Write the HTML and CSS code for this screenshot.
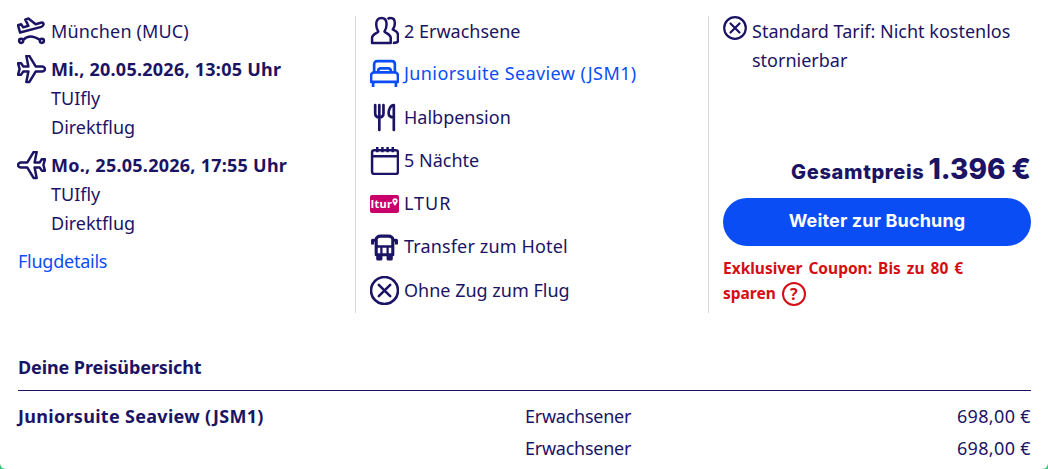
FILE: index.html
```html
<!DOCTYPE html>
<html lang="de">

<head>
    <meta charset="utf-8">
    <title>Angebot</title>
    <link rel="stylesheet" href="styles.css">
</head>

<body>
    <main class="card">
        <section class="summary">
            <!-- Flights -->
            <div class="col col-flight">
                <div class="flight-row">
                    <svg class="icon" viewBox="0 0 28 28" fill="none" stroke="#1b1464" stroke-width="2.400" stroke-linejoin="round" stroke-linecap="round">
                        <path d="M3 15L1 8l3-1 2 3 5-1.500L8 2.500l3-1 7 5.500 5-1.500c2-.5 3 .5 2.500 2-.3 1-1 1.500-2 2z"/>
                        <circle cx="4" cy="23" r="2"/>
                        <circle cx="24" cy="23" r="2"/>
                        <path d="M6 22c4-4 10-4 16 0"/>
                    </svg>
                    <span class="airport">München (MUC)</span>
                </div>
                <div class="flight-row flight-leg">
                    <svg class="icon" viewBox="0 0 28 28" fill="none" stroke="#1b1464" stroke-width="2.400" stroke-linejoin="round">
                        <path d="M9 1h3l6 10h6c2 0 3 1.500 3 2.500S26 16 24 16h-6l-6 10H9l2-10H6l-2 3H1l1.500-5.500L1 8h3l2 3h5z"/>
                    </svg>
                    <strong class="leg-time">Mi., 20.05.2026, 13:05 Uhr</strong>
                </div>
                <div class="flight-sub">TUIfly</div>
                <div class="flight-sub">Direktflug</div>
                <div class="flight-row flight-leg">
                    <svg class="icon" viewBox="0 0 28 28" fill="none" stroke="#1b1464" stroke-width="2.400" stroke-linejoin="round">
                        <path d="M19 1h-3l-6 10H4c-2 0-3 1.500-3 2.500S2 16 4 16h6l6 10h3l-2-10h5l2 3h3l-1.500-5.500L27 8h-3l-2 3h-5z"/>
                    </svg>
                    <strong class="leg-time">Mo., 25.05.2026, 17:55 Uhr</strong>
                </div>
                <div class="flight-sub">TUIfly</div>
                <div class="flight-sub">Direktflug</div>
                <a class="link details-link" href="#">Flugdetails</a>
            </div>

            <!-- Hotel facts -->
            <div class="col col-hotel">
                <div class="fact">
                    <svg class="icon" viewBox="0 0 28 28" fill="none" stroke="#1b1464" stroke-width="2.400" stroke-linejoin="round">
                        <path d="M2 26v-5c0-3 4-4 6-6-2-3-2-5-2-7 0-4 2-6 5-6s5 2 5 6c0 2 0 4-2 7 2 2 6 3 6 6v5z"/>
                        <path d="M17 3c1-1 2-1 3-1 3 0 4 2 4 5 0 2-.5 4-2 6 2 1 5 2 5 5v6c0 1-1 2-5 2"/>
                    </svg>
                    <span class="first-label">2 Erwachsene</span>
                </div>
                <a class="fact link" href="#">
                    <svg class="icon" viewBox="0 0 28 28" fill="none" stroke="#0b4df5" stroke-width="2.600" stroke-linejoin="round">
                        <path d="M4 13V5c0-1.500 1-3 3-3h14c2 0 3 1.500 3 3v8"/>
                        <path d="M8 13v-2c0-1 1-2 2-2h8c1 0 2 1 2 2v2"/>
                        <path d="M4 13h20c1 0 3 1 3 3v6H1v-6c0-2 2-3 3-3z"/>
                        <path d="M3 22v5M25 22v5"/>
                    </svg>
                    <span class="room-link">Juniorsuite Seaview (JSM1)</span>
                </a>
                <div class="fact">
                    <svg class="icon" viewBox="0 0 28 28" fill="none" stroke="#1b1464" stroke-width="2.600" stroke-linecap="round" stroke-linejoin="round">
                        <path d="M5 2v8c0 3 2 4 4 4s4-1 4-4V2M9 2v24"/>
                        <path d="M23 26V2c-3 0-5 4-5 8 0 3 2 4 5 4"/>
                    </svg>
                    <span>Halbpension</span>
                </div>
                <div class="fact">
                    <svg class="icon" viewBox="0 0 28 28" fill="none" stroke="#1b1464" stroke-width="2.400" stroke-linejoin="round">
                        <rect x="2" y="4" width="25" height="23" rx="2"/>
                        <path d="M2 10h25M7 1v5M12 1v5M17 1v5M22 1v5"/>
                    </svg>
                    <span>5 Nächte</span>
                </div>
                <div class="fact">
                    <span class="ltur-logo">ltur<svg class="ltur-pin" viewBox="0 0 8 10"><path fill="#fff" d="M4 0a3.500 3.500 0 0 1 3.500 3.500C7.500 6 4 10 4 10S.5 6 .5 3.500A3.500 3.500 0 0 1 4 0z"/><circle cx="4" cy="3.500" r="1.300" fill="#c9006b"/></svg></span>
                    <span class="brand-label">LTUR</span>
                </div>
                <div class="fact">
                    <svg class="icon" viewBox="0 0 28 28" fill="none" stroke="#1b1464" stroke-width="3" stroke-linejoin="round">
                        <path d="M6 22V7c0-2 2-3 4-3h8c2 0 4 1 4 3v15z"/>
                        <path d="M6 14h16M11 14v8M17 14v8" stroke-width="2.200"/>
                        <path d="M2.500 12V8H6M25.500 12V8H22M7.500 22v4h3v-4M17.500 22v4h3v-4"/>
                    </svg>
                    <span class="transfer-label">Transfer zum Hotel</span>
                </div>
                <div class="fact">
                    <svg class="icon" viewBox="0 0 28 28" fill="none" stroke="#1b1464" stroke-width="2.500" stroke-linecap="round">
                        <circle cx="14" cy="14" r="13"/>
                        <path d="M8.500 8.500l11 11M19.500 8.500l-11 11"/>
                    </svg>
                    <span>Ohne Zug zum Flug</span>
                </div>
            </div>

            <!-- Price -->
            <div class="col col-price">
                <div class="tariff">
                    <svg class="icon-small" viewBox="0 0 24 24" fill="none" stroke="#1b1464" stroke-width="2.200" stroke-linecap="round">
                        <circle cx="12" cy="12" r="10.800"/>
                        <path d="M7.500 7.500l9 9M16.500 7.500l-9 9"/>
                    </svg>
                    <span class="tariff-text">Standard Tarif: Nicht kostenlos stornierbar</span>
                </div>
                <div class="total">
                    <span class="total-label">Gesamtpreis</span>
                    <span class="total-amount">1.396 €</span>
                </div>
                <button type="button" class="book-btn">Weiter zur Buchung</button>
                <div class="coupon">
                    <div>Exklusiver Coupon: Bis zu 80 €</div>
                    <div class="coupon-last">
                        <span>sparen</span>
                        <span class="coupon-help">?</span>
                    </div>
                </div>
            </div>
        </section>

        <section class="overview">
            <h2>Deine Preisübersicht</h2>
            <div class="price-row">
                <strong>Juniorsuite Seaview (JSM1)</strong>
                <span class="price-type">Erwachsener</span>
                <span class="price">698,00 €</span>
            </div>
            <div class="price-row">
                <span></span>
                <span class="price-type">Erwachsener</span>
                <span class="price">698,00 €</span>
            </div>
        </section>
    </main>
</body>

</html>
```

FILE: styles.css
```css
html, body {
    margin: 0;
    height: 469px;
    overflow: hidden;
}

body {
    background: #3ec983;
    color: #1b1464;
    font-family: "Noto Sans", sans-serif;
    font-size: 18px;
    line-height: 29px;
}

strong {
    font-weight: 700;
    letter-spacing: .3px;
}

.card {
    height: 469px;
    box-sizing: border-box;
    padding: 16px 17px 0 18px;
    background: #fff;
    border-radius: 0 0 6px 6px;
    overflow: hidden;
}

.summary {
    display: grid;
    grid-template-columns: 337px 353px 1fr;
    grid-template-rows: 297px;
}

.col-flight {
    padding-top: 1px;
}

.col-hotel, .col-price {
    border-left: 1px solid #d8d8d8;
    padding-left: 14px;
}

.col-price {
    display: flex;
    flex-direction: column;
}

.link {
    color: #0b4df5;
    text-decoration: none;
}

.icon {
    width: 29px;
    height: 29px;
    flex: none;
}

.flight-row {
    display: flex;
    align-items: center;
    gap: 5px;
    margin-left: -1px;
}

.airport {
    letter-spacing: .15px;
}

.leg-time {
    letter-spacing: .25px;
}

.flight-leg {
    margin-top: 9px;
}

.flight-sub {
    padding-left: 33px;
}

.details-link {
    display: block;
    margin-top: 9px;
    letter-spacing: -.25px;
}

.fact {
    display: flex;
    align-items: center;
    gap: 5px;
    height: 29px;
    margin-bottom: 14.300px;
}

.first-label {
    margin-top: 2px;
}

.room-link {
    letter-spacing: .4px;
}

.brand-label {
    letter-spacing: 1px;
}

.transfer-label {
    letter-spacing: .15px;
}

.ltur-logo {
    display: flex;
    align-items: center;
    justify-content: center;
    width: 29px;
    height: 18px;
    background: #c9006b;
    border-radius: 2px;
    color: #fff;
    font-size: 11px;
    font-weight: 700;
    line-height: 18px;
    letter-spacing: .3px;
}

.ltur-pin {
    width: 6px;
    height: 8px;
    margin-bottom: 4px;
}

.tariff {
    display: flex;
    gap: 5px;
}

.tariff-text {
    margin-top: 1px;
}

.icon-small {
    width: 24px;
    height: 24px;
    flex: none;
}

.total {
    display: flex;
    justify-content: flex-end;
    align-items: baseline;
    gap: 4px;
    margin-top: 80px;
    font-family: "Inter", sans-serif;
    font-weight: 800;
}

.total-label {
    font-size: 20px;
    letter-spacing: .65px;
}

.total-amount {
    font-size: 28px;
}

.book-btn {
    height: 48px;
    margin-top: 11px;
    padding: 0 0 4px;
    border: 0;
    border-radius: 24px;
    background: #0b4df5;
    color: #fff;
    font-family: "Inter", sans-serif;
    font-size: 18px;
    font-weight: 700;
    letter-spacing: .15px;
}

.coupon {
    margin-top: 10px;
    color: #d40e14;
    font-size: 15.500px;
    font-weight: 700;
    line-height: 25px;
    word-spacing: 2px;
}

.coupon-last {
    display: flex;
    align-items: center;
    gap: 6px;
}

.coupon-help {
    box-sizing: border-box;
    width: 24px;
    height: 24px;
    border: 2px solid #d40e14;
    border-radius: 50%;
    font-size: 16px;
    line-height: 20px;
    text-align: center;
}

.overview {
    margin-top: 40px;
}

.overview h2 {
    margin: 0;
    padding-bottom: 8px;
    border-bottom: 1px solid #1b1464;
    font-size: 18px;
    font-weight: 700;
    line-height: 29px;
    letter-spacing: -.1px;
}

.price-row {
    display: grid;
    grid-template-columns: 507px 1fr auto;
    height: 32px;
    line-height: 29px;
}

.overview h2 + .price-row {
    margin-top: 11px;
}

.price-type {
    letter-spacing: -.25px;
}

.price {
    text-align: right;
    letter-spacing: .35px;
}
```
